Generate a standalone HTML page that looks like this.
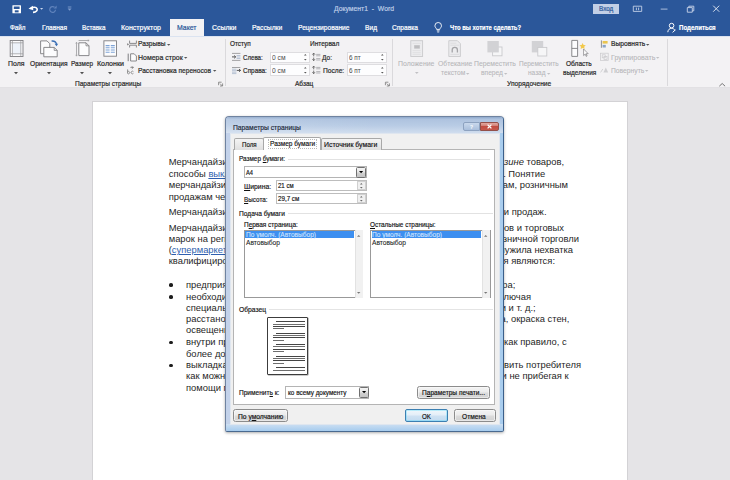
<!DOCTYPE html>
<html><head><meta charset="utf-8">
<style>
*{box-sizing:border-box;margin:0;padding:0}
html,body{width:730px;height:480px;overflow:hidden;background:#e5e4e7;font-family:"Liberation Sans",sans-serif;}
.a{position:absolute}
.t{position:absolute;white-space:pre;transform-origin:0 50%;-webkit-text-stroke:.22px currentColor}
u{text-decoration-thickness:.5px;text-underline-offset:.8px}
.dg .t{-webkit-text-stroke:.18px currentColor}
.dt{position:absolute;white-space:nowrap;font-size:9.4px;line-height:12px;color:#1f1f1f}
.lnk{color:#2f5fae;text-decoration:underline}
svg{position:absolute;overflow:visible}
</style></head><body>
<div class="a" style="left:0.0px;top:0.0px;width:730.0px;height:36.0px;background:#2b579a"></div>
<div class="t" style="left:334.0px;top:4.9px;font-size:8px;line-height:8px;color:#bccbe6;transform:scaleX(0.852);">Документ1  -  Word</div>
<div class="a" style="left:592.5px;top:3.5px;width:26.5px;height:10.0px;background:#c2cfe6"></div>
<div class="t" style="left:598.7px;top:5.0px;font-size:7.5px;line-height:7.5px;color:#2b579a;transform:scaleX(0.843);">Вход</div>
<div class="t" style="left:9.5px;top:23.7px;font-size:8px;line-height:8px;color:#ffffff;transform:scaleX(0.788);">Файл</div>
<div class="t" style="left:42.0px;top:23.7px;font-size:8px;line-height:8px;color:#ffffff;transform:scaleX(0.821);">Главная</div>
<div class="t" style="left:82.0px;top:23.7px;font-size:8px;line-height:8px;color:#ffffff;transform:scaleX(0.790);">Вставка</div>
<div class="t" style="left:121.0px;top:23.7px;font-size:8px;line-height:8px;color:#ffffff;transform:scaleX(0.877);">Конструктор</div>
<div class="a" style="left:169.5px;top:18.5px;width:34.2px;height:18.5px;background:#f3f2f4"></div>
<div class="t" style="left:177.0px;top:23.7px;font-size:8px;line-height:8px;color:#2b579a;transform:scaleX(0.861);">Макет</div>
<div class="t" style="left:211.7px;top:23.7px;font-size:8px;line-height:8px;color:#ffffff;transform:scaleX(0.863);">Ссылки</div>
<div class="t" style="left:251.7px;top:23.7px;font-size:8px;line-height:8px;color:#ffffff;transform:scaleX(0.844);">Рассылки</div>
<div class="t" style="left:297.5px;top:23.7px;font-size:8px;line-height:8px;color:#ffffff;transform:scaleX(0.834);">Рецензирование</div>
<div class="t" style="left:365.0px;top:23.7px;font-size:8px;line-height:8px;color:#ffffff;transform:scaleX(0.829);">Вид</div>
<div class="t" style="left:392.0px;top:23.7px;font-size:8px;line-height:8px;color:#ffffff;transform:scaleX(0.828);">Справка</div>
<div class="t" style="left:449.5px;top:23.7px;font-size:8px;line-height:8px;color:#ffffff;font-weight:bold;transform:scaleX(0.739);">Что вы хотите сделать?</div>
<div class="t" style="left:679.0px;top:23.7px;font-size:8px;line-height:8px;color:#ffffff;font-weight:bold;transform:scaleX(0.764);">Поделиться</div>
<div class="a" style="left:0.0px;top:36.0px;width:730.0px;height:52.3px;background:#f3f2f4;border-bottom:1px solid #e2e1e4;border-top:1px solid #dbe3f0"></div>
<div class="t" style="left:8.3px;top:60.4px;font-size:8px;line-height:8px;color:#2a2a2a;transform:scaleX(0.862);">Поля</div>
<div class="t" style="left:30.0px;top:60.4px;font-size:8px;line-height:8px;color:#2a2a2a;transform:scaleX(0.826);">Ориентация</div>
<div class="t" style="left:71.0px;top:60.4px;font-size:8px;line-height:8px;color:#2a2a2a;transform:scaleX(0.800);">Размер</div>
<div class="t" style="left:96.7px;top:60.4px;font-size:8px;line-height:8px;color:#2a2a2a;transform:scaleX(0.884);">Колонки</div>
<svg class="a" style="left:14.30px;top:71.70px" width="4.00" height="2.20"><polygon points="0,0 4.00,0 2.00,2.20" fill="#505050"/></svg>
<svg class="a" style="left:47.00px;top:71.70px" width="4.00" height="2.20"><polygon points="0,0 4.00,0 2.00,2.20" fill="#505050"/></svg>
<svg class="a" style="left:80.00px;top:71.70px" width="4.00" height="2.20"><polygon points="0,0 4.00,0 2.00,2.20" fill="#505050"/></svg>
<svg class="a" style="left:108.00px;top:71.70px" width="4.00" height="2.20"><polygon points="0,0 4.00,0 2.00,2.20" fill="#505050"/></svg>
<div class="t" style="left:138.3px;top:40.4px;font-size:8px;line-height:8px;color:#2a2a2a;transform:scaleX(0.826);">Разрывы</div>
<svg class="a" style="left:167.00px;top:43.56px" width="3.40" height="1.87"><polygon points="0,0 3.40,0 1.70,1.87" fill="#555"/></svg>
<div class="t" style="left:138.3px;top:53.6px;font-size:8px;line-height:8px;color:#2a2a2a;transform:scaleX(0.870);">Номера строк</div>
<svg class="a" style="left:183.60px;top:56.77px" width="3.40" height="1.87"><polygon points="0,0 3.40,0 1.70,1.87" fill="#555"/></svg>
<div class="t" style="left:138.3px;top:66.8px;font-size:8px;line-height:8px;color:#2a2a2a;transform:scaleX(0.826);">Расстановка переносов</div>
<svg class="a" style="left:213.30px;top:70.06px" width="3.40" height="1.87"><polygon points="0,0 3.40,0 1.70,1.87" fill="#555"/></svg>
<div class="t" style="left:74.7px;top:80.4px;font-size:8px;line-height:8px;color:#2a2a2a;transform:scaleX(0.820);">Параметры страницы</div>
<div class="a" style="left:225.0px;top:39.0px;width:1.0px;height:47.0px;background:#dad9dc"></div>
<div class="t" style="left:230.0px;top:40.4px;font-size:8px;line-height:8px;color:#2a2a2a;transform:scaleX(0.800);">Отступ</div>
<div class="t" style="left:310.3px;top:40.4px;font-size:8px;line-height:8px;color:#2a2a2a;transform:scaleX(0.813);">Интервал</div>
<div class="t" style="left:242.8px;top:53.6px;font-size:8px;line-height:8px;color:#2a2a2a;transform:scaleX(0.766);">Слева:</div>
<div class="t" style="left:242.8px;top:66.8px;font-size:8px;line-height:8px;color:#2a2a2a;transform:scaleX(0.801);">Справа:</div>
<div class="t" style="left:322.0px;top:53.6px;font-size:8px;line-height:8px;color:#2a2a2a;transform:scaleX(0.821);">До:</div>
<div class="t" style="left:322.5px;top:66.8px;font-size:8px;line-height:8px;color:#2a2a2a;transform:scaleX(0.830);">После:</div>
<div class="a" style="left:269.5px;top:51.5px;width:40.3px;height:11.8px;background:#fdfdfe;border:1px solid #dedde0"></div>
<div class="t" style="left:271.5px;top:53.8px;font-size:7.5px;line-height:7.5px;color:#4a4a4a;transform:scaleX(0.890);-webkit-text-stroke:0;">0 см</div>
<svg class="a" style="left:303.70px;top:54.08px" width="2.60" height="1.43"><polygon points="0,1.43 2.60,1.43 1.30,0" fill="#555"/></svg>
<svg class="a" style="left:303.70px;top:59.48px" width="2.60" height="1.43"><polygon points="0,0 2.60,0 1.30,1.43" fill="#555"/></svg>
<div class="a" style="left:269.5px;top:64.3px;width:40.3px;height:12.2px;background:#fdfdfe;border:1px solid #dedde0"></div>
<div class="t" style="left:271.5px;top:66.8px;font-size:7.5px;line-height:7.5px;color:#4a4a4a;transform:scaleX(0.890);-webkit-text-stroke:0;">0 см</div>
<svg class="a" style="left:303.70px;top:67.09px" width="2.60" height="1.43"><polygon points="0,1.43 2.60,1.43 1.30,0" fill="#555"/></svg>
<svg class="a" style="left:303.70px;top:72.48px" width="2.60" height="1.43"><polygon points="0,0 2.60,0 1.30,1.43" fill="#555"/></svg>
<div class="a" style="left:347.0px;top:51.5px;width:40.0px;height:11.8px;background:#fdfdfe;border:1px solid #dedde0"></div>
<div class="t" style="left:349.3px;top:53.8px;font-size:7.5px;line-height:7.5px;color:#4a4a4a;transform:scaleX(0.851);-webkit-text-stroke:0;">6 пт</div>
<svg class="a" style="left:380.90px;top:54.08px" width="2.60" height="1.43"><polygon points="0,1.43 2.60,1.43 1.30,0" fill="#555"/></svg>
<svg class="a" style="left:380.90px;top:59.48px" width="2.60" height="1.43"><polygon points="0,0 2.60,0 1.30,1.43" fill="#555"/></svg>
<div class="a" style="left:347.0px;top:64.3px;width:40.0px;height:12.2px;background:#fdfdfe;border:1px solid #dedde0"></div>
<div class="t" style="left:349.3px;top:66.8px;font-size:7.5px;line-height:7.5px;color:#4a4a4a;transform:scaleX(0.851);-webkit-text-stroke:0;">6 пт</div>
<svg class="a" style="left:380.90px;top:67.09px" width="2.60" height="1.43"><polygon points="0,1.43 2.60,1.43 1.30,0" fill="#555"/></svg>
<svg class="a" style="left:380.90px;top:72.48px" width="2.60" height="1.43"><polygon points="0,0 2.60,0 1.30,1.43" fill="#555"/></svg>
<div class="t" style="left:294.5px;top:80.4px;font-size:8px;line-height:8px;color:#2a2a2a;transform:scaleX(0.815);">Абзац</div>
<div class="a" style="left:392.3px;top:39.0px;width:1.0px;height:47.0px;background:#dad9dc"></div>
<div class="t" style="left:398.3px;top:60.4px;font-size:8px;line-height:8px;color:#b6b6b9;transform:scaleX(0.861);-webkit-text-stroke:.08px;">Положение</div>
<svg class="a" style="left:414.50px;top:72.01px" width="3.60" height="1.98"><polygon points="0,0 3.60,0 1.80,1.98" fill="#c0c0c3"/></svg>
<div class="t" style="left:437.5px;top:60.4px;font-size:8px;line-height:8px;color:#b6b6b9;transform:scaleX(0.849);-webkit-text-stroke:.08px;">Обтекание</div>
<div class="t" style="left:440.8px;top:69.4px;font-size:8px;line-height:8px;color:#b6b6b9;transform:scaleX(0.831);-webkit-text-stroke:.08px;">текстом</div>
<svg class="a" style="left:466.30px;top:72.56px" width="3.40" height="1.87"><polygon points="0,0 3.40,0 1.70,1.87" fill="#c0c0c3"/></svg>
<div class="t" style="left:474.0px;top:60.4px;font-size:8px;line-height:8px;color:#b6b6b9;transform:scaleX(0.853);-webkit-text-stroke:.08px;">Переместить</div>
<div class="t" style="left:481.3px;top:69.4px;font-size:8px;line-height:8px;color:#b6b6b9;transform:scaleX(0.833);-webkit-text-stroke:.08px;">вперед</div>
<svg class="a" style="left:504.30px;top:72.56px" width="3.40" height="1.87"><polygon points="0,0 3.40,0 1.70,1.87" fill="#c0c0c3"/></svg>
<div class="t" style="left:519.2px;top:60.4px;font-size:8px;line-height:8px;color:#b6b6b9;transform:scaleX(0.806);-webkit-text-stroke:.08px;">Переместить</div>
<div class="t" style="left:527.5px;top:69.4px;font-size:8px;line-height:8px;color:#b6b6b9;transform:scaleX(0.812);-webkit-text-stroke:.08px;">назад</div>
<svg class="a" style="left:546.60px;top:72.56px" width="3.40" height="1.87"><polygon points="0,0 3.40,0 1.70,1.87" fill="#c0c0c3"/></svg>
<div class="t" style="left:566.3px;top:60.4px;font-size:8px;line-height:8px;color:#2a2a2a;transform:scaleX(0.819);">Область</div>
<div class="t" style="left:562.5px;top:69.4px;font-size:8px;line-height:8px;color:#2a2a2a;transform:scaleX(0.808);">выделения</div>
<div class="t" style="left:610.7px;top:40.4px;font-size:8px;line-height:8px;color:#2a2a2a;transform:scaleX(0.840);">Выровнять</div>
<svg class="a" style="left:646.30px;top:43.56px" width="3.40" height="1.87"><polygon points="0,0 3.40,0 1.70,1.87" fill="#555"/></svg>
<div class="t" style="left:610.7px;top:53.8px;font-size:8px;line-height:8px;color:#b6b6b9;transform:scaleX(0.877);-webkit-text-stroke:.08px;">Группировать</div>
<svg class="a" style="left:656.30px;top:56.96px" width="3.40" height="1.87"><polygon points="0,0 3.40,0 1.70,1.87" fill="#c0c0c3"/></svg>
<div class="t" style="left:610.7px;top:66.8px;font-size:8px;line-height:8px;color:#b6b6b9;transform:scaleX(0.843);-webkit-text-stroke:.08px;">Повернуть</div>
<svg class="a" style="left:645.30px;top:70.06px" width="3.40" height="1.87"><polygon points="0,0 3.40,0 1.70,1.87" fill="#c0c0c3"/></svg>
<div class="t" style="left:507.0px;top:80.4px;font-size:8px;line-height:8px;color:#2a2a2a;transform:scaleX(0.834);">Упорядочение</div>
<div class="a" style="left:666.7px;top:39.0px;width:1.0px;height:47.0px;background:#dad9dc"></div>
<div class="a" style="left:92.0px;top:100.5px;width:536.3px;height:380.5px;background:#fff;border:1px solid #d3d2d5"></div>
<div class="dt" style="left:168.7px;top:156.1px">Мерчандайзинг</div>
<div class="dt" style="left:168.7px;top:167.8px">способы <span class="lnk">выкладки</span></div>
<div class="dt" style="left:168.7px;top:179.2px">мерчандайзинг</div>
<div class="dt" style="left:168.7px;top:190.5px">продажам через</div>
<div class="dt" style="left:168.7px;top:206.1px">Мерчандайзинг</div>
<div class="dt" style="left:168.7px;top:221.6px">Мерчандайзинг</div>
<div class="dt" style="left:168.7px;top:232.9px">марок на региональных</div>
<div class="dt" style="left:168.7px;top:244.0px">(<span class="lnk">супермаркеты</span></div>
<div class="dt" style="left:168.7px;top:255.2px">квалифицированных</div>
<div class="dt" style="right:166.0px;top:156.1px">в мага<i>зине</i> товаров,</div>
<div class="dt" style="right:184.7px;top:167.8px">товара. Понятие</div>
<div class="dt" style="right:162.0px;top:179.2px">продажам, розничным</div>
<div class="dt" style="right:183.5px;top:206.1px">товаров и продаж.</div>
<div class="dt" style="right:166.0px;top:221.6px">товаров и торговых</div>
<div class="dt" style="right:151.0px;top:232.9px">розничной торговли</div>
<div class="dt" style="right:157.0px;top:244.0px">послужила нехватка</div>
<div class="dt" style="right:175.0px;top:255.2px">для предприятия являются:</div>
<div class="dt" style="left:186.0px;top:278.6px">предприятие</div>
<div class="dt" style="left:186.0px;top:290.6px">необходимо</div>
<div class="dt" style="left:186.0px;top:301.6px">специальное</div>
<div class="dt" style="left:186.0px;top:313.1px">расстановка</div>
<div class="dt" style="left:186.0px;top:324.1px">освещение</div>
<div class="dt" style="left:186.0px;top:336.1px">внутри предприятия</div>
<div class="dt" style="left:186.0px;top:347.6px">более доступно</div>
<div class="dt" style="left:186.0px;top:358.9px">выкладка товара</div>
<div class="dt" style="left:186.0px;top:370.0px">как можно</div>
<div class="dt" style="left:186.0px;top:381.6px">помощи продавцов</div>
<div class="a" style="left:169.3px;top:283.3px;width:3.7px;height:3.7px;background:#1c1c1c;border-radius:50%"></div>
<div class="a" style="left:169.3px;top:295.3px;width:3.7px;height:3.7px;background:#1c1c1c;border-radius:50%"></div>
<div class="a" style="left:169.3px;top:340.8px;width:3.7px;height:3.7px;background:#1c1c1c;border-radius:50%"></div>
<div class="a" style="left:169.3px;top:363.6px;width:3.7px;height:3.7px;background:#1c1c1c;border-radius:50%"></div>
<div class="dt" style="right:214.7px;top:278.6px">товара;</div>
<div class="dt" style="right:199.0px;top:290.6px">включая</div>
<div class="dt" style="right:194.4px;top:301.6px">стеллажи и т. д.;</div>
<div class="dt" style="right:160.6px;top:313.1px">зала, окраска стен,</div>
<div class="dt" style="right:163.3px;top:336.1px">расположены, как правило, с</div>
<div class="dt" style="right:149.0px;top:358.9px">чтобы заставить потребителя</div>
<div class="dt" style="right:161.4px;top:370.0px">самостоятельно и не прибегая к</div>
<svg class="a" style="left:0;top:0" width="730" height="100" viewBox="0 0 730 100" fill="none"><rect x="12.400" y="5.300" width="8.600" height="7.900" rx=".5" fill="#fff"/><rect x="13.800" y="6.500" width="5.800" height="2.500" fill="#2b579a"/><rect x="14.800" y="10.300" width="3.800" height="2.100" fill="#2b579a"/><path d="M33 12.400c3.400-.2 4.800-2.200 4-3.800-.9-1.800-3.800-1.800-6.200-.3" stroke="#fff" stroke-width="1.600"/><path d="M28.500 8.800l4.300-3.100.5 4.600z" fill="#fff"/><path d="M40 8h3.2l-1.6 1.8z" fill="#c6d3ea"/><path d="M54.5 7.3a2.9 2.9 0 1 0 1 2.5" stroke="#5f82bb" stroke-width="1.2"/><path d="M56.6 5.6v3h-3z" fill="#5f82bb"/><path d="M67.8 7h3.6" stroke="#7f9ccc" stroke-width=".9"/><path d="M67.6 8.6h4l-2 2.2z" fill="#7f9ccc"/><path d="M633.3 6.2h8.4v5.2h-8.4z" stroke="#c3d0e7" stroke-width=".9"/><path d="M636.4 7.6v2.6M638.6 7.6v2.6" stroke="#c3d0e7" stroke-width=".9"/><path d="M660.7 9.1h6.8" stroke="#b9c8e2" stroke-width=".9"/><path d="M687.3 7.6h5v4.6h-5zM688.8 7.6v-1.4h5v4.6h-1.5" stroke="#c9d5ea" stroke-width=".9"/><path d="M713.2 5.7l6 6M719.2 5.7l-6 6" stroke="#e8edf6" stroke-width=".9"/><path d="M436.6 29.4c-.2-1.4-1.7-2-1.7-3.6a3.3 3.3 0 0 1 6.6 0c0 1.600-1.500 2.200-1.700 3.600z" stroke="#fff" stroke-width=".9"/><path d="M436.8 30.8h2.800M437.200 32h2" stroke="#fff" stroke-width=".8"/><circle cx="671.6" cy="25.6" r="2.300" stroke="#fff" stroke-width="1"/><path d="M667.800 32.200c.2-2.600 1.900-3.900 3.800-3.900s2.700.9 3.300 2.200" stroke="#fff" stroke-width="1"/><path d="M672.600 32.400l2.800-2.600" stroke="#fff" stroke-width="1"/><rect x="10.2" y="40.500" width="12.800" height="16" fill="#fcfcfd" stroke="#7d7d80" stroke-width=".9"/><rect x="12.400" y="42.800" width="8.400" height="11" fill="#edf2f9"/><path d="M12.400 40.500v16M20.800 40.500v16M10.200 42.800h12.800M10.200 53.800h12.800" stroke="#98989b" stroke-width=".7"/><path d="M40.600 40.900h6.400l2.800 2.800v10h-9.200z" fill="#fcfcfd" stroke="#7d7d80" stroke-width=".9"/><path d="M43.800 47.400h10.400l3 3v6.400h-13.400z" fill="#fcfcfd" stroke="#7d7d80" stroke-width=".9"/><path d="M54.200 47.400v3h3" stroke="#7d7d80" stroke-width=".8"/><path d="M51.600 41c2.800-.2 4.600 1.200 4.900 3.200" stroke="#3a6fb5" stroke-width="1.300"/><path d="M54.600 43.800h3.600l-1.700 2.400z" fill="#3a6fb5"/><path d="M78.800 42.800h7.200l3 3v9.800h-10.200z" fill="#fcfcfd" stroke="#7d7d80" stroke-width=".9"/><path d="M86 42.800v3h3" stroke="#7d7d80" stroke-width=".8"/><path d="M76.500 42.400v13.600M78.600 40.500h10.400" stroke="#9a9a9d" stroke-width=".8"/><path d="M75.600 43.600l.9-1.400.9 1.400M75.600 54.800l.9 1.400.9-1.400M87.800 39.700l1.400.8-1.400.8" stroke="#9a9a9d" stroke-width=".6"/><rect x="103.900" y="40.800" width="12.600" height="15.400" fill="#fcfcfd" stroke="#7d7d80" stroke-width=".9"/><path d="M105.600 45.6h4M110.800 45.6h4" stroke="#7ea3d6" stroke-width="1.100"/><path d="M105.600 47.8h4M110.800 47.8h4" stroke="#7ea3d6" stroke-width="1.100"/><path d="M105.600 50.0h4M110.800 50.0h4" stroke="#7ea3d6" stroke-width="1.100"/><path d="M105.600 52.2h4M110.800 52.2h4" stroke="#7ea3d6" stroke-width="1.100"/><path d="M129.600 40.600v2.800h6.800v-2.800M129.600 47.500v-2.300h6.800v2.300" stroke="#7d7d80" stroke-width=".9"/><path d="M127.400 43.200l1.500 1.100-1.500 1.100z" fill="#555"/><path d="M128.200 53.600v7.600" stroke="#7d7d80" stroke-width="1"/><path d="M130.600 53.800h3.600l2.200 2.200v5h-5.800z" fill="#fcfcfd" stroke="#7d7d80" stroke-width=".9"/><path d="M127.600 69.400v4M127.600 71.800a1.200 1.200 0 1 1 0 1.600" stroke="#777" stroke-width=".8"/><path d="M133.400 71.600a1.300 1.300 0 1 0 0 1.800" stroke="#777" stroke-width=".8"/><path d="M130.400 67.400h3.200" stroke="#777" stroke-width=".8"/><path d="M131.800 66.200l1.400 1.400-1.400 1.200" stroke="#666" stroke-width=".7"/><path d="M218.6 85.200v-3h3" stroke="#777" stroke-width=".8"/><path d="M222.6 86h-2.600M222.6 86v-2.600M220.0 83.600l2.400 2.400" stroke="#777" stroke-width=".8"/><path d="M385.4 85.200v-3h3" stroke="#777" stroke-width=".8"/><path d="M389.4 86h-2.600M389.4 86v-2.600M386.8 83.600l2.400 2.400" stroke="#777" stroke-width=".8"/><path d="M232 53.400h8.400M232 60.400h8.400" stroke="#8e8e91" stroke-width=".8"/><path d="M236.600 55.500h3.800M236.600 57h3.800M236.600 58.500h3.800" stroke="#9fb0c8" stroke-width=".7"/><path d="M232 56.900h3.600M234.200 55.500l1.500 1.400-1.500 1.400" stroke="#444" stroke-width=".9"/><path d="M232 67.500h8.400" stroke="#8e8e91" stroke-width=".8"/><path d="M232 69.200h4.400M232 70.700h4.400M232 72.200h4.400M232 73.600h4.400" stroke="#9fb0c8" stroke-width=".7"/><path d="M236.800 70.400h3.800M239 69l1.500 1.400-1.500 1.400" stroke="#444" stroke-width=".9"/><path d="M313.700 53.3v3M312.400 54.6l1.300-1.500 1.300 1.500M313.700 57.6v3M312.400 59.2l1.300 1.500 1.300-1.500" stroke="#555" stroke-width=".8"/><path d="M316.200 54.4h4.200M316.200 55.8h4.200M316.200 58.6h4.200M316.200 60.0h4.200" stroke="#9a9a9d" stroke-width=".7"/><path d="M313.700 66.3v3M312.400 67.6l1.300-1.500 1.300 1.500M313.700 70.6v3M312.400 72.2l1.300 1.500 1.300-1.500" stroke="#555" stroke-width=".8"/><path d="M316.200 67.4h4.200M316.200 68.8h4.200M316.200 71.6h4.200M316.200 73.0h4.200" stroke="#9a9a9d" stroke-width=".7"/><rect x="410.800" y="40.700" width="11.800" height="15.800" fill="#ececee" stroke="#c9c9cc" stroke-width=".9"/><path d="M412.600 43.400h8.200M412.600 50.600h8.200M412.600 52.600h8.200M412.600 54.400h8.200" stroke="#dcdcde" stroke-width=".7"/><rect x="414.200" y="45.200" width="5.600" height="3.400" fill="#bdbdc0"/><path d="M448.800 40.700h8.600l3 3v12.800h-11.600z" fill="#ececee" stroke="#c9c9cc" stroke-width=".9"/><path d="M450.400 43.200h6M450.400 45.200h8.600M450.400 54.400h8.600" stroke="#d6d6d8" stroke-width=".7"/><path d="M452.200 52.400v-2.400a2.600 2.600 0 0 1 5.200 0v2.400" stroke="#a4a4a7" stroke-width="1.300"/><rect x="492.600" y="47" width="9.400" height="8.800" fill="#f6f6f7" stroke="#c9c9cc" stroke-width=".9"/><rect x="487.400" y="41" width="11.400" height="11.400" fill="#d2d2d5"/><rect x="531.800" y="41" width="11.400" height="11.400" fill="#d2d2d5"/><rect x="537.800" y="47.400" width="9" height="8.600" fill="#f6f6f7" stroke="#c9c9cc" stroke-width=".9"/><path d="M571.800 40.400h5.800v16h-5.800zM571.800 48.400h5.800" stroke="#7d7d80" stroke-width=".9" fill="#fcfcfd"/><path d="M582.600 43l1 2 2.200.3-1.600 1.500.4 2.200-2-1-2 1 .4-2.200-1.600-1.500 2.200-.3z" fill="#f2c94c"/><path d="M583.600 49v6.600l1.600-1.500 1 2.300.9-.4-1-2.300h2.100z" fill="#fff" stroke="#6a6a6d" stroke-width=".6"/><path d="M601.400 40.400v7.400" stroke="#777" stroke-width=".8"/><rect x="602.600" y="41" width="5" height="2.600" fill="#eac54f"/><rect x="602.600" y="44.900" width="3.200" height="2.600" fill="#8aa4c8"/><rect x="600.600" y="53.200" width="7.600" height="7.400" stroke="#c9c9cc" stroke-width=".7"/><rect x="602.200" y="54.800" width="3" height="3" stroke="#c9c9cc" stroke-width=".7"/><rect x="604" y="56.600" width="3" height="3" stroke="#c9c9cc" stroke-width=".7"/><path d="M603.400 72.400l2.400-5 2.400 5z" fill="#cfcfd2"/><path d="M600.600 72.400l2.200-3.400" stroke="#c9c9cc" stroke-width=".8"/><path d="M719.300 86.200l2.900-2.700 2.900 2.700" stroke="#666" stroke-width=".9"/></svg>
<div class="dg">
<div class="a" style="left:225.3px;top:115.8px;width:278.9px;height:315.8px;background:linear-gradient(90deg,#c3d2ea 0%,#bccfe9 50%,#a9cdee 100%);border:1px solid #6f83a0;border-right-color:#3b5f8a;border-bottom-color:#4a6a90;border-radius:4px 4px 2px 2px;box-shadow:0 1px 3px rgba(0,0,0,.32)"></div>
<div class="a" style="left:226.3px;top:116.8px;width:276.9px;height:16.5px;background:linear-gradient(#8ea8cb 0%,#aec3df 14%,#b9cce5 55%,#d0ddee 100%);border-radius:3px 3px 0 0"></div>
<div class="a" style="left:226.3px;top:116.8px;width:153.7px;height:16.5px;background:linear-gradient(90deg,rgba(255,255,255,.12),rgba(255,255,255,0));border-radius:3px 0 0 0"></div>
<div class="a" style="left:226.3px;top:424.0px;width:276.9px;height:6.6px;background:linear-gradient(#cddff2,#a6ccee);border-radius:0 0 2px 2px"></div>
<div class="a" style="left:230.3px;top:133.3px;width:269.5px;height:291.5px;background:#f0f0f0;border:1px solid #dfe6ef"></div>
<div class="t" style="left:232.8px;top:123.6px;font-size:8px;line-height:8px;color:#1b2738;transform:scaleX(0.841);">Параметры страницы</div>
<div class="a" style="left:462.5px;top:121.9px;width:17.5px;height:9.2px;background:linear-gradient(#c9d8ec,#a9bfdc);border:1px solid #8da2c0;border-radius:2px 0 0 2px"></div>
<div class="t" style="left:470.2px;top:123.8px;font-size:6px;line-height:6px;color:#f2f6fb;font-weight:bold;transform:scaleX(0.819);">?</div>
<div class="a" style="left:480.0px;top:121.9px;width:18.7px;height:9.2px;background:linear-gradient(#e3a9a1,#d07c72 45%,#c24d42 50%,#c6594d);border:1px solid #93504a;border-radius:0 2px 2px 0"></div>
<svg class="a" style="left:486.9px;top:124.3px" width="5" height="5" viewBox="0 0 5 5"><path d="M.6.6 4.4 4.400M4.400.6.6 4.400" stroke="#fff" stroke-width="1.300"/></svg>
<div class="a" style="left:233.2px;top:149.3px;width:261.8px;height:255.3px;background:#fff;border:1px solid #b4b4b4"></div>
<div class="a" style="left:234.0px;top:138.3px;width:29.6px;height:11.7px;background:linear-gradient(#f4f4f4,#dfdfdf);border:1px solid #a8a8a8;border-bottom:none;border-radius:2px 2px 0 0"></div>
<div class="t" style="left:241.9px;top:141.3px;font-size:8px;line-height:8px;color:#111;transform:scaleX(0.767);">Поля</div>
<div class="a" style="left:320.5px;top:138.3px;width:61.4px;height:11.7px;background:linear-gradient(#f4f4f4,#dfdfdf);border:1px solid #a8a8a8;border-bottom:none;border-radius:2px 2px 0 0"></div>
<div class="t" style="left:324.0px;top:141.3px;font-size:8px;line-height:8px;color:#111;transform:scaleX(0.861);">Источник бумаги</div>
<div class="a" style="left:263.2px;top:136.7px;width:57.4px;height:13.8px;background:#fff;border:1px solid #a8a8a8;border-bottom:none;border-radius:2px 2px 0 0"></div>
<div class="a" style="left:267.5px;top:139.4px;width:49.9px;height:9.2px;border:1px dotted #b9b9b9"></div>
<div class="t" style="left:269.8px;top:140.3px;font-size:8px;line-height:8px;color:#111;transform:scaleX(0.816);">Размер бумаги</div>
<div class="t" style="left:239.0px;top:155.2px;font-size:8px;line-height:8px;color:#111;transform:scaleX(0.799);">Размер <u>б</u>умаги:</div>
<div class="a" style="left:288.0px;top:158.5px;width:202.0px;height:0.8px;background:#e2e2e2"></div>
<div class="a" style="left:243.5px;top:166.3px;width:123.1px;height:12.1px;background:#fff;border:1px solid #b4b4b4"></div>
<div class="t" style="left:245.7px;top:169.3px;font-size:7.5px;line-height:7.5px;color:#111;transform:scaleX(0.763);">A4</div>
<div class="a" style="left:356.3px;top:166.6px;width:10.1px;height:11.6px;background:linear-gradient(#f4f4f4,#e6e6e6 48%,#d2d2d2 52%,#c4c4c4);border:1px solid #707070;border-radius:1.5px"></div>
<svg class="a" style="left:359.20px;top:171.34px" width="4.20" height="2.31"><polygon points="0,0 4.20,0 2.10,2.31" fill="#000"/></svg>
<div class="t" style="left:243.5px;top:183.1px;font-size:8px;line-height:8px;color:#111;transform:scaleX(0.852);"><u>Ш</u>ирина:</div>
<div class="t" style="left:243.5px;top:195.9px;font-size:8px;line-height:8px;color:#111;transform:scaleX(0.791);"><u>В</u>ысота:</div>
<div class="a" style="left:276.0px;top:179.8px;width:90.6px;height:11.5px;background:#fff;border:1px solid #bdbdbd"></div>
<div class="t" style="left:278.2px;top:182.4px;font-size:7.5px;line-height:7.5px;color:#111;transform:scaleX(0.807);">21 см</div>
<div class="a" style="left:357.3px;top:180.6px;width:8.6px;height:9.9px;background:#f0f0f0;border:1px solid #d0d0d0"></div>
<svg class="a" style="left:360.40px;top:182.64px" width="2.60" height="1.43"><polygon points="0,1.43 2.60,1.43 1.30,0" fill="#666"/></svg>
<svg class="a" style="left:360.40px;top:187.03px" width="2.60" height="1.43"><polygon points="0,0 2.60,0 1.30,1.43" fill="#666"/></svg>
<div class="a" style="left:276.0px;top:192.8px;width:90.6px;height:11.5px;background:#fff;border:1px solid #bdbdbd"></div>
<div class="t" style="left:278.2px;top:195.4px;font-size:7.5px;line-height:7.5px;color:#111;transform:scaleX(0.829);">29,7 см</div>
<div class="a" style="left:357.3px;top:193.6px;width:8.6px;height:9.9px;background:#f0f0f0;border:1px solid #d0d0d0"></div>
<svg class="a" style="left:360.40px;top:195.64px" width="2.60" height="1.43"><polygon points="0,1.43 2.60,1.43 1.30,0" fill="#666"/></svg>
<svg class="a" style="left:360.40px;top:200.03px" width="2.60" height="1.43"><polygon points="0,0 2.60,0 1.30,1.43" fill="#666"/></svg>
<div class="t" style="left:238.5px;top:210.2px;font-size:8px;line-height:8px;color:#111;transform:scaleX(0.828);">Подача бумаги</div>
<div class="a" style="left:287.5px;top:213.3px;width:205.5px;height:0.8px;background:#e2e2e2"></div>
<div class="t" style="left:244.2px;top:221.3px;font-size:8px;line-height:8px;color:#111;transform:scaleX(0.809);">П<u>е</u>рвая страница:</div>
<div class="t" style="left:370.4px;top:221.3px;font-size:8px;line-height:8px;color:#111;transform:scaleX(0.801);"><u>О</u>стальные страницы:</div>
<div class="a" style="left:243.8px;top:229.6px;width:119.7px;height:68.8px;background:#fff;border:1px solid #999"></div>
<div class="a" style="left:245.1px;top:231.0px;width:109.0px;height:7.4px;background:#3d8ff0"></div>
<div class="t" style="left:245.6px;top:230.9px;font-size:7.5px;line-height:7.5px;color:#d4e6ff;transform:scaleX(0.874);-webkit-text-stroke:.1px;">По умолч. (Автовыбор)</div>
<div class="t" style="left:245.6px;top:239.4px;font-size:7.5px;line-height:7.5px;color:#1a1a1a;transform:scaleX(0.886);-webkit-text-stroke:.08px;">Автовыбор</div>
<div class="a" style="left:354.9px;top:230.4px;width:7.8px;height:67.2px;background:#f1f1f1;border-left:1px solid #e2e2e2"></div>
<svg class="a" style="left:357.10px;top:235.06px" width="3.40" height="1.87"><polygon points="0,1.87 3.40,1.87 1.70,0" fill="#777"/></svg>
<svg class="a" style="left:357.10px;top:292.37px" width="3.40" height="1.87"><polygon points="0,0 3.40,0 1.70,1.87" fill="#777"/></svg>
<div class="a" style="left:370.2px;top:229.6px;width:120.6px;height:68.8px;background:#fff;border:1px solid #999"></div>
<div class="a" style="left:371.5px;top:231.0px;width:109.9px;height:7.4px;background:#3d8ff0"></div>
<div class="t" style="left:372.0px;top:230.9px;font-size:7.5px;line-height:7.5px;color:#d4e6ff;transform:scaleX(0.874);-webkit-text-stroke:.1px;">По умолч. (Автовыбор)</div>
<div class="t" style="left:372.0px;top:239.4px;font-size:7.5px;line-height:7.5px;color:#1a1a1a;transform:scaleX(0.886);-webkit-text-stroke:.08px;">Автовыбор</div>
<div class="a" style="left:482.2px;top:230.4px;width:7.8px;height:67.2px;background:#f1f1f1;border-left:1px solid #e2e2e2"></div>
<svg class="a" style="left:484.40px;top:235.06px" width="3.40" height="1.87"><polygon points="0,1.87 3.40,1.87 1.70,0" fill="#777"/></svg>
<svg class="a" style="left:484.40px;top:292.37px" width="3.40" height="1.87"><polygon points="0,0 3.40,0 1.70,1.87" fill="#777"/></svg>
<div class="t" style="left:238.5px;top:306.1px;font-size:8px;line-height:8px;color:#111;transform:scaleX(0.841);">Образец</div>
<div class="a" style="left:269.0px;top:309.3px;width:224.0px;height:0.7px;background:#e4e4e4"></div>
<div class="a" style="left:267.0px;top:317.4px;width:41.4px;height:57.2px;background:#fff;border:1px solid #3c3c3c;border-radius:1px;box-shadow:.6px .6px 0 #9a9a9a"></div>
<div class="a" style="left:275.6px;top:321.3px;width:29.8px;height:1.1px;background:#454545"></div>
<div class="a" style="left:273.2px;top:323.8px;width:32.2px;height:1.1px;background:#6e6e6e"></div>
<div class="a" style="left:273.2px;top:325.8px;width:32.2px;height:1.1px;background:#454545"></div>
<div class="a" style="left:273.2px;top:328.1px;width:10.6px;height:1.1px;background:#6e6e6e"></div>
<div class="a" style="left:275.6px;top:332.8px;width:29.8px;height:1.1px;background:#454545"></div>
<div class="a" style="left:273.2px;top:335.1px;width:32.2px;height:1.1px;background:#6e6e6e"></div>
<div class="a" style="left:273.2px;top:337.4px;width:32.2px;height:1.1px;background:#454545"></div>
<div class="a" style="left:273.2px;top:339.8px;width:10.6px;height:1.1px;background:#6e6e6e"></div>
<div class="a" style="left:275.6px;top:344.1px;width:29.8px;height:1.1px;background:#454545"></div>
<div class="a" style="left:273.2px;top:346.4px;width:32.2px;height:1.1px;background:#6e6e6e"></div>
<div class="a" style="left:273.2px;top:348.8px;width:32.2px;height:1.1px;background:#454545"></div>
<div class="a" style="left:273.2px;top:351.1px;width:10.6px;height:1.1px;background:#6e6e6e"></div>
<div class="a" style="left:275.6px;top:355.8px;width:29.8px;height:1.1px;background:#454545"></div>
<div class="a" style="left:273.2px;top:358.1px;width:32.2px;height:1.1px;background:#6e6e6e"></div>
<div class="a" style="left:273.2px;top:360.3px;width:32.2px;height:1.1px;background:#454545"></div>
<div class="a" style="left:273.2px;top:362.6px;width:10.6px;height:1.1px;background:#6e6e6e"></div>
<div class="a" style="left:275.6px;top:367.1px;width:29.8px;height:1.1px;background:#454545"></div>
<div class="a" style="left:273.2px;top:369.6px;width:32.2px;height:1.1px;background:#6e6e6e"></div>
<div class="t" style="left:239.0px;top:389.4px;font-size:8px;line-height:8px;color:#111;transform:scaleX(0.820);">Применит<u>ь</u> к:</div>
<div class="a" style="left:285.2px;top:386.3px;width:83.6px;height:12.3px;background:#fff;border:1px solid #b4b4b4"></div>
<div class="t" style="left:287.7px;top:389.4px;font-size:7.5px;line-height:7.5px;color:#111;transform:scaleX(0.850);">ко всему документу</div>
<div class="a" style="left:359.4px;top:386.6px;width:9.2px;height:11.7px;background:linear-gradient(#f4f4f4,#e6e6e6 48%,#d2d2d2 52%,#c4c4c4);border:1px solid #707070;border-radius:1.5px"></div>
<svg class="a" style="left:361.90px;top:391.35px" width="4.20" height="2.31"><polygon points="0,0 4.20,0 2.10,2.31" fill="#000"/></svg>
<div class="a" style="left:417.1px;top:386.0px;width:73.4px;height:13.0px;background:linear-gradient(#f3f3f3 0%,#ebebeb 48%,#dcdcdc 52%,#d2d2d2);border:1px solid #8c8c8c;border-radius:2.5px;box-shadow:inset 0 0 0 .6px #fbfbfb"></div>
<div class="t" style="left:422.3px;top:389.0px;font-size:8px;line-height:8px;color:#111;transform:scaleX(0.822);">П<u>а</u>раметры печати...</div>
<div class="a" style="left:233.2px;top:409.4px;width:55.1px;height:13.0px;background:linear-gradient(#f3f3f3 0%,#ebebeb 48%,#dcdcdc 52%,#d2d2d2);border:1px solid #8c8c8c;border-radius:2.5px;box-shadow:inset 0 0 0 .6px #fbfbfb"></div>
<div class="t" style="left:237.7px;top:412.5px;font-size:8px;line-height:8px;color:#111;transform:scaleX(0.837);">По у<u>м</u>олчанию</div>
<div class="a" style="left:405.2px;top:409.4px;width:42.8px;height:13.0px;background:linear-gradient(#f0f6fb 0%,#e3eef8 48%,#cfe2f3 52%,#c3dbf0);border:1px solid #3c7fb1;border-radius:2px;box-shadow:inset 0 0 0 1px #48d8fb55"></div>
<div class="t" style="left:422.0px;top:412.5px;font-size:8px;line-height:8px;color:#111;transform:scaleX(0.779);">OK</div>
<div class="a" style="left:453.5px;top:409.4px;width:42.1px;height:13.0px;background:linear-gradient(#f3f3f3 0%,#ebebeb 48%,#dcdcdc 52%,#d2d2d2);border:1px solid #8c8c8c;border-radius:2.5px;box-shadow:inset 0 0 0 .6px #fbfbfb"></div>
<div class="t" style="left:462.0px;top:412.5px;font-size:8px;line-height:8px;color:#111;transform:scaleX(0.826);">Отмена</div>
</div>
</body></html>
